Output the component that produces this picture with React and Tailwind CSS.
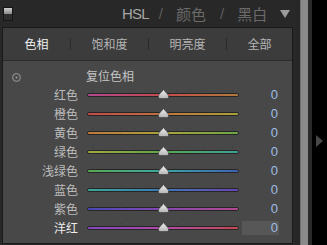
import React from "react";

const rows = [
  { label: "红色", grad: "bg-linear-to-r from-[#b0478f] via-[#c44a4a] to-[#b07a3a]" },
  { label: "橙色", grad: "bg-linear-to-r from-[#c24848] via-[#c0723e] to-[#a8a23a]" },
  { label: "黄色", grad: "bg-linear-to-r from-[#c0783a] via-[#aaa23e] to-[#6aa844]" },
  { label: "绿色", grad: "bg-linear-to-r from-[#a2a83e] via-[#5aa84a] to-[#3aa096]" },
  { label: "浅绿色", grad: "bg-linear-to-r from-[#58a84e] via-[#3aa6a2] to-[#4060b4]" },
  { label: "蓝色", grad: "bg-linear-to-r from-[#3aa896] via-[#3a78b8] to-[#6442b4]" },
  { label: "紫色", grad: "bg-linear-to-r from-[#4848b8] via-[#8446b2] to-[#b44890]" },
  { label: "洋红", grad: "bg-linear-to-r from-[#8446c0] via-[#b248a8] to-[#c44850]", active: true },
];

const cjk = { fontFamily: '"Noto Sans CJK SC", "Noto Sans", sans-serif' };

function Thumb() {
  return (
    <svg width="11" height="10" viewBox="0 0 11 10" className="absolute left-[71px] top-[4px]">
      <defs>
        <linearGradient id="tg" x1="0" y1="0" x2="0" y2="1">
          <stop offset="0" stopColor="#f4f4f4" />
          <stop offset="1" stopColor="#b4b4b4" />
        </linearGradient>
      </defs>
      <path d="M5.5 0.3 C6.5 3 10.6 5 10.6 7.5 L10 9.6 L1 9.6 L0.4 7.5 C0.4 5 4.5 3 5.5 0.3 Z" fill="url(#tg)" stroke="#2a2a2a" strokeWidth="0.5" />
    </svg>
  );
}

function Row({ label, grad, active }) {
  return (
    <div className="flex items-center h-[19px]">
      <div
        className={`w-[75px] text-right text-[12px] leading-none ${active ? "text-[#ececec]" : "text-[#bdbdbd]"}`}
        style={cjk}
      >
        {label}
      </div>
      <div className="relative ml-[9px] w-[152px] h-[19px] flex flex-col">
        <div className="flex pl-[5px] gap-[13px] mt-[5px] h-[1px]">
          {Array.from({ length: 11 }).map((_, i) => (
            <div key={i} className="w-[1px] h-[1px] bg-[#3a3a3a]" />
          ))}
        </div>
        <div className="mt-[2px] h-[4px] rounded-[2px] border border-[#262626] bg-[#262626] overflow-hidden">
          <div className={`h-full ${grad}`} />
        </div>
        <Thumb />
      </div>
      <div
        className={`ml-[3px] w-[37px] h-[14px] flex items-center justify-end pr-[1px] text-[13px] leading-none text-[#9fbde6] ${active ? "bg-[#575757]" : ""}`}
        style={{ fontFamily: '"Liberation Sans", sans-serif' }}
      >
        0
      </div>
    </div>
  );
}

export default function App() {
  return (
    <div className="flex w-[327px] h-[245px] bg-black overflow-hidden">
      <div className="w-[300px] h-full bg-[#282828] flex flex-col">
        <div className="h-[27px] flex items-center shrink-0">
          <div className="ml-[3px] w-[10px] h-[14px] border border-[#151515] bg-[#2e2e2e] flex flex-col">
            <div className="h-[6px] bg-linear-to-b from-[#d0d0d0] to-[#8a8a8a]" />
          </div>
          <span
            className="ml-[109px] text-[15px] leading-none text-[#a6a6a6] tracking-[-0.8px]"
            style={{ fontFamily: '"Liberation Sans", sans-serif' }}
          >
            HSL
          </span>
          <span className="ml-[10px] text-[15px] leading-none text-[#5c5c5c]" style={{ fontFamily: '"Liberation Sans", sans-serif' }}>
            /
          </span>
          <span className="ml-[13px] text-[15px] leading-none text-[#6a6a6a]" style={cjk}>
            颜色
          </span>
          <span className="ml-[14px] text-[15px] leading-none text-[#5c5c5c]" style={{ fontFamily: '"Liberation Sans", sans-serif' }}>
            /
          </span>
          <span className="ml-[13px] text-[15px] leading-none text-[#6a6a6a]" style={cjk}>
            黑白
          </span>
          <svg width="10" height="8" viewBox="0 0 10 8" className="ml-[13px] mt-[1px]">
            <polygon points="0,0 10,0 5,8" fill="#9c9c9c" />
          </svg>
        </div>
        <div className="ml-[2px] w-[291px] h-[217px] border border-[#1a1a1a] flex flex-col shrink-0">
          <div className="h-[33px] bg-[#3c3c3c] border-b border-[#2c2c2c] flex items-center text-[12px] leading-none" style={cjk}>
            <div className="w-[67px] text-center text-[#f0f0f0]">色相</div>
            <div className="w-[1px] h-[12px] bg-[#2a2a2a]" />
            <div className="w-[77px] text-center text-[#b4b4b4]">饱和度</div>
            <div className="w-[1px] h-[12px] bg-[#2a2a2a]" />
            <div className="w-[77px] text-center text-[#b4b4b4]">明亮度</div>
            <div className="w-[1px] h-[12px] bg-[#2a2a2a]" />
            <div className="flex-1 text-center text-[#b4b4b4]">全部</div>
          </div>
          <div className="flex-1 bg-[#484848] flex flex-col">
            <div className="mt-[5px] h-[19px] flex items-center">
              <svg width="9" height="9" viewBox="0 0 9 9" className="ml-[9px] mt-[3px]">
                <circle cx="4.5" cy="4.5" r="4" fill="#5a5a5a" stroke="#8e8e8e" strokeWidth="1" />
                <circle cx="4.5" cy="4.5" r="2.2" fill="#3a3a3a" />
                <circle cx="4.5" cy="4.5" r="1.1" fill="#a8a8a8" />
              </svg>
              <span className="ml-[65px] text-[12px] leading-none text-[#c4c4c4]" style={cjk}>
                复位色相
              </span>
            </div>
            {rows.map((r) => (
              <Row key={r.label} {...r} />
            ))}
          </div>
        </div>
      </div>
      <div className="w-[8px] h-full bg-[#8a8a8a] border-l border-[#6e6e6e]" />
      <div className="w-[4px] h-full bg-[#2a2a2a]" />
      <div className="flex-1 h-full bg-black pt-[135px] pl-[4px]">
        <svg width="7" height="12" viewBox="0 0 7 12">
          <polygon points="0,0 7,6 0,12" fill="#484848" />
        </svg>
      </div>
    </div>
  );
}
